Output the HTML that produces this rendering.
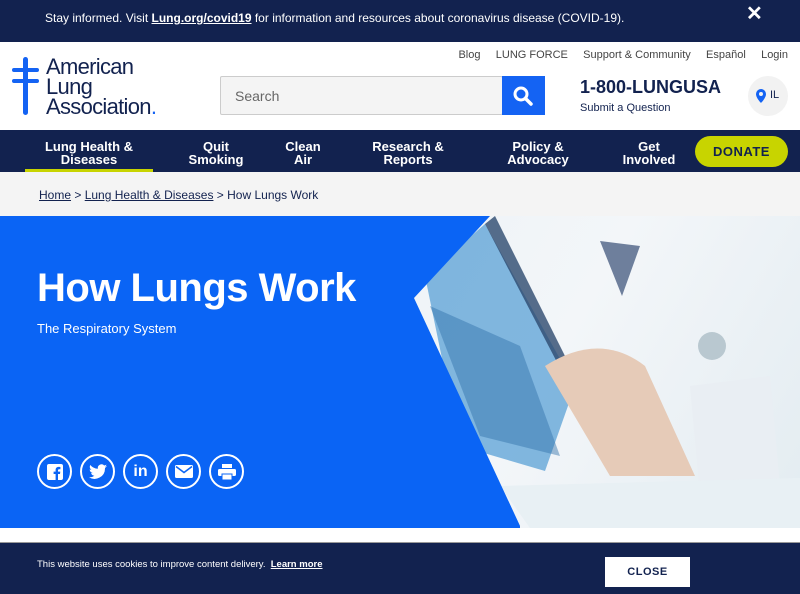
<!DOCTYPE html>
<html><head><meta charset="utf-8"><style>
*{margin:0;padding:0;box-sizing:border-box}
body{width:800px;height:594px;overflow:hidden;font-family:"Liberation Sans",sans-serif;background:#fff;position:relative}
.a{position:absolute}
.nav span{position:absolute;color:#fff;font-weight:bold;font-size:13px;line-height:13px;text-align:center}
.soc{position:absolute;top:454px;width:35px;height:35px;border:2px solid #fff;border-radius:50%;display:flex;align-items:center;justify-content:center}
</style></head><body>
<div class="a" style="left:0;top:0;width:800px;height:42px;background:#12224f"></div>
<div class="a" style="left:45px;top:11px;color:#fff;font-size:12px;white-space:nowrap">Stay informed. Visit <b style="text-decoration:underline">Lung.org/covid19</b> for information and resources about coronavirus disease (COVID-19).</div>
<div class="a" style="left:746px;top:1px;color:#fff;font-size:20px;font-weight:bold">✕</div>

<svg class="a" style="left:11px;top:55px" width="30" height="62"><rect x="12" y="2" width="5" height="58" rx="2.5" fill="#1463f3"/><rect x="1" y="13" width="27" height="4" rx="2" fill="#1463f3"/><rect x="1" y="24" width="27" height="4" rx="2" fill="#1463f3"/></svg>
<div class="a" style="left:46px;top:57px;color:#12224f;font-size:22px;line-height:20px;letter-spacing:-0.7px;white-space:nowrap">American<br>Lung<br>Association<span style="color:#1463f3">.</span></div>

<div class="a" style="left:220px;top:76px;width:283px;height:39px;background:#f4f4f4;border:1px solid #ccc;border-radius:2px"></div>
<div class="a" style="left:235px;top:88px;color:#666;font-size:14px">Search</div>
<div class="a" style="left:502px;top:76px;width:43px;height:39px;background:#1463f3"></div>
<svg class="a" style="left:511px;top:84px" width="24" height="24"><circle cx="10" cy="10" r="6" stroke="#fff" stroke-width="3" fill="none"/><path d="M14.5 14.5L20 20" stroke="#fff" stroke-width="3.5" stroke-linecap="round"/></svg>

<div class="a" style="right:12px;top:49px;color:#444;font-size:11px;white-space:nowrap">Blog&nbsp;&nbsp;&nbsp;&nbsp;&nbsp;LUNG FORCE&nbsp;&nbsp;&nbsp;&nbsp;&nbsp;Support &amp; Community&nbsp;&nbsp;&nbsp;&nbsp;&nbsp;Español&nbsp;&nbsp;&nbsp;&nbsp;&nbsp;Login</div>
<div class="a" style="left:580px;top:77px;color:#12224f;font-size:18px;font-weight:bold;white-space:nowrap">1-800-LUNGUSA</div>
<div class="a" style="left:580px;top:102px;color:#12224f;font-size:11px">Submit a Question</div>
<div class="a" style="left:748px;top:76px;width:40px;height:40px;border-radius:50%;background:#f2f2f2"></div>
<svg class="a" style="left:755px;top:88px" width="12" height="16"><path d="M6 1a5 5 0 0 1 5 5c0 4-5 9-5 9S1 10 1 6a5 5 0 0 1 5-5z" fill="#1463f3"/><circle cx="6" cy="6" r="2" fill="#f2f2f2"/></svg>
<div class="a" style="left:770px;top:89px;color:#12224f;font-size:11px">IL</div>

<div class="a nav" style="left:0;top:130px;width:800px;height:42px;background:#12224f">
<span style="left:38px;top:10px;width:102px">Lung Health &amp;<br>Diseases</span>
<span style="left:180px;top:10px;width:72px">Quit<br>Smoking</span>
<span style="left:275px;top:10px;width:56px">Clean<br>Air</span>
<span style="left:365px;top:10px;width:86px">Research &amp;<br>Reports</span>
<span style="left:500px;top:10px;width:76px">Policy &amp;<br>Advocacy</span>
<span style="left:614px;top:10px;width:70px">Get<br>Involved</span>
</div>
<div class="a" style="left:25px;top:169px;width:128px;height:3px;background:#c8d400"></div>
<div class="a" style="left:695px;top:136px;width:93px;height:31px;border-radius:16px;background:#c8d400;color:#12224f;font-weight:bold;font-size:13px;text-align:center;line-height:31px;letter-spacing:0.5px">DONATE</div>

<div class="a" style="left:0;top:172px;width:800px;height:44px;background:#f4f4f4"></div>
<div class="a" style="left:39px;top:188px;color:#12224f;font-size:12px"><u>Home</u> &gt; <u>Lung Health &amp; Diseases</u> &gt; How Lungs Work</div>

<div class="a" style="left:0;top:216px;width:800px;height:312px;background:linear-gradient(120deg,#dfe9f1 0%,#eef3f7 40%,#f3f6f9 65%,#e3ecf1 100%)"></div>
<svg class="a" style="left:400px;top:216px" width="400" height="312">
<path d="M25 60 L85 8 L175 170 L145 255 L60 230Z" fill="#5aa0d6" opacity="0.75"/>
<path d="M85 8 L95 0 L180 170 L172 175Z" fill="#2d4a6e" opacity="0.8"/>
<path d="M30 90 L120 130 L160 240 L80 220Z" fill="#2e6ea8" opacity="0.45"/>
<path d="M145 150 Q200 115 245 150 L295 260 L210 260 Z" fill="#e6cbb8"/>
<path d="M200 25 L240 30 L222 80Z" fill="#6e7f9c"/>
<path d="M290 170 L370 160 L380 270 L300 280Z" fill="#e9eef3"/>
<circle cx="312" cy="130" r="14" fill="#b9c8d0"/>
<path d="M100 270 L400 262 L400 312 L130 312Z" fill="#e8f0f4"/>
</svg>
<svg class="a" style="left:0;top:216px" width="520" height="312"><path d="M0 0 H490 L414 82 L521 312 H0Z" fill="#0a64f5"/></svg>
<div class="a" style="left:37px;top:266px;color:#fff;font-size:40px;font-weight:bold;letter-spacing:-0.5px">How Lungs Work</div>
<div class="a" style="left:37px;top:321px;color:#fff;font-size:13px">The Respiratory System</div>
<div class="soc" style="left:37px"><svg width="16" height="16"><rect width="16" height="16" rx="2" fill="#fff"/><path d="M11 16V10h2l.3-2.4H11V6.3c0-.7.2-1.1 1.2-1.1h1.2V3c-.3 0-1-.1-1.8-.1-1.8 0-3 1.1-3 3.1v1.6H6.6V10h2V16z" fill="#0a64f5"/></svg></div>
<div class="soc" style="left:80px"><svg width="18" height="16"><path d="M18 2c-.7.3-1.4.5-2.1.6.8-.5 1.3-1.2 1.6-2-.7.4-1.5.7-2.3.9A3.7 3.7 0 0 0 8.9 4.8 10.4 10.4 0 0 1 1.3 1a3.7 3.7 0 0 0 1.1 4.9c-.6 0-1.2-.2-1.700-.5 0 1.8 1.3 3.3 3 3.6-.6.2-1.1.2-1.7.1.5 1.5 1.8 2.5 3.4 2.6A7.4 7.4 0 0 1 0 13.2 10.4 10.4 0 0 0 16 4.4V3.9c.8-.5 1.5-1.2 2-1.9z" fill="#fff"/></svg></div>
<div class="soc" style="left:123px;color:#fff;font-size:16px;font-weight:bold">in</div>
<div class="soc" style="left:166px"><svg width="18" height="13"><rect width="18" height="13" rx="1.5" fill="#fff"/><path d="M1 1.5L9 7.5L17 1.5" stroke="#0a64f5" stroke-width="1.6" fill="none"/></svg></div>
<div class="soc" style="left:209px"><svg width="18" height="16"><rect x="4" y="0" width="10" height="4" fill="#fff"/><rect x="0" y="5" width="18" height="7" rx="1.5" fill="#fff"/><rect x="4" y="10" width="10" height="6" fill="#fff" stroke="#0a64f5" stroke-width="1"/></svg></div>

<div class="a" style="left:0;top:542px;width:800px;height:52px;background:#12224f;border-top:1px solid #999"></div>
<div class="a" style="left:37px;top:559px;color:#fff;font-size:9.5px;white-space:nowrap">This website uses cookies to improve content delivery.&nbsp;&nbsp;<b style="text-decoration:underline">Learn more</b></div>
<div class="a" style="left:605px;top:557px;width:85px;height:30px;background:#fff;color:#12224f;font-weight:bold;font-size:11px;text-align:center;line-height:30px;letter-spacing:0.5px">CLOSE</div>
</body></html>
